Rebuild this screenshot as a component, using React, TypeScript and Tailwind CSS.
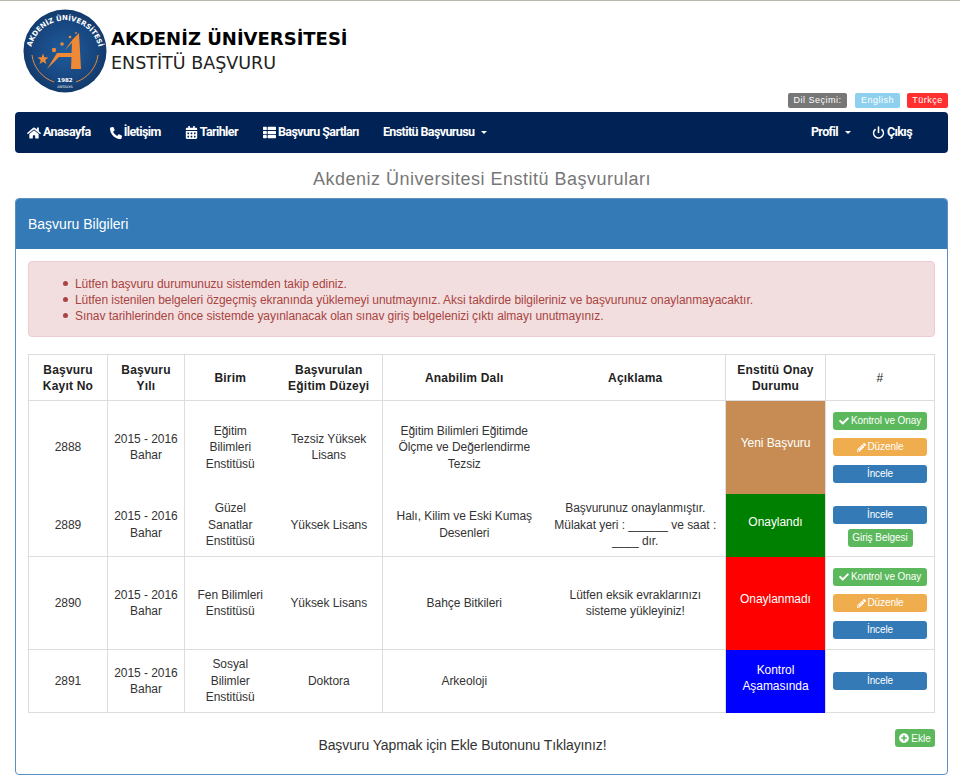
import React from 'react';
import { FaHome, FaPhoneAlt, FaCalendarAlt, FaThList, FaCheck, FaPencilAlt, FaPlusCircle } from 'react-icons/fa';
import { FiPower } from 'react-icons/fi';

function Logo() {
  return (
    <svg width="84" height="84" viewBox="0 0 84 84" className="shrink-0">
      <defs>
        <radialGradient id="logoBg" cx="50%" cy="50%" r="50%">
          <stop offset="0%" stopColor="#1f5c9c" />
          <stop offset="75%" stopColor="#17457e" />
          <stop offset="100%" stopColor="#123a6b" />
        </radialGradient>
        <path id="logoTop" d="M7.5 46 A34.5 34.5 0 1 1 76.5 46" />
      </defs>
      <circle cx="42" cy="42" r="41.5" fill="url(#logoBg)" />
      <text fill="#ffffff" fontSize="7" fontWeight="700" fontFamily="'DejaVu Sans', sans-serif">
        <textPath href="#logoTop" startOffset="50%" textAnchor="middle">AKDENİZ ÜNİVERSİTESİ</textPath>
      </text>
      <path d="M9 46 A33 33 0 0 0 31 73" fill="none" stroke="#e88b3a" strokeWidth="1" />
      <path d="M75 46 A33 33 0 0 1 53 73" fill="none" stroke="#e88b3a" strokeWidth="1" />
      <text x="42" y="73" textAnchor="middle" fill="#ffffff" fontSize="5.5" fontWeight="700" fontFamily="'DejaVu Sans', sans-serif">1982</text>
      <text x="42" y="79" textAnchor="middle" fill="#ffffff" fontSize="3.6" fontFamily="'DejaVu Sans', sans-serif">ANTALYA</text>
      <path d="M56 24 L58 60 L48 60 L48.5 48 L36 48 L24 60 L34 44 L48.5 44 L49 34 L42 41 L50 30 Z" fill="#ee8a35" />
      <path d="M20 44.5 L21.4 48.3 L25.5 48.5 L22.3 51 L23.4 55 L20 52.7 L16.6 55 L17.7 51 L14.5 48.5 L18.6 48.3 Z" fill="#ee8a35" />
      <circle cx="31" cy="41" r="2.2" fill="#ee8a35" />
      <circle cx="39" cy="35" r="1.8" fill="#ee8a35" />
      <circle cx="47" cy="28" r="1.3" fill="#ee8a35" />
      <circle cx="53" cy="24" r="0.9" fill="#ee8a35" />
    </svg>
  );
}

function NavItem({ icon, children, caret }: { icon?: React.ReactNode; children: React.ReactNode; caret?: boolean }) {
  return (
    <a className="flex items-center gap-[2px] text-white font-bold text-[12.5px] tracking-[-0.6px] font-['Roboto',sans-serif]">
      {icon}
      <span>{children}</span>
      {caret && <span className="ml-[5px] w-0 h-0 border-x-[3px] border-x-transparent border-t-[3px] border-t-white" />}
    </a>
  );
}

function Btn({ color, icon, children }: { color: string; icon?: React.ReactNode; children: React.ReactNode }) {
  return (
    <div className={`${color} w-[94px] h-[18px] rounded-[3px] text-white text-[10px] tracking-[-0.1px] flex items-center justify-center gap-[2px] leading-none`}>
      {icon}
      {children}
    </div>
  );
}

const green = 'bg-[#5cb85c]';
const orange = 'bg-[#f0ad4e]';
const blue = 'bg-[#337ab7]';

function ControlButtons() {
  return (
    <div className="flex flex-col items-center gap-[8.5px]">
      <Btn color={green} icon={<FaCheck className="w-[10px] h-[10px]" />}>Kontrol ve Onay</Btn>
      <Btn color={orange} icon={<FaPencilAlt className="w-[9px] h-[9px]" />}>Düzenle</Btn>
      <Btn color={blue}>İncele</Btn>
    </div>
  );
}

const notes = [
  'Lütfen başvuru durumunuzu sistemden takip ediniz.',
  'Lütfen istenilen belgeleri özgeçmiş ekranında yüklemeyi unutmayınız. Aksi takdirde bilgileriniz ve başvurunuz onaylanmayacaktır.',
  'Sınav tarihlerinden önce sistemde yayınlanacak olan sınav giriş belgelenizi çıktı almayı unutmayınız.',
];

const rows = [
  {
    no: '2888',
    birim: <>Eğitim<br />Bilimleri<br />Enstitüsü</>,
    duzey: <>Tezsiz Yüksek<br />Lisans</>,
    dal: <>Eğitim Bilimleri Eğitimde<br />Ölçme ve Değerlendirme<br />Tezsiz</>,
    aciklama: null,
    durum: <>Yeni Başvuru</>,
    durumClass: 'bg-[#c68c53] pb-[8px]',
    actions: <ControlButtons />,
    h: 'h-[93px]',
    last: false,
  },
  {
    no: '2889',
    birim: <>Güzel<br />Sanatlar<br />Enstitüsü</>,
    duzey: <>Yüksek Lisans</>,
    dal: <>Halı, Kilim ve Eski Kumaş<br />Desenleri</>,
    aciklama: <>Başvurunuz onaylanmıştır.<br />Mülakat yeri : ______ ve saat :<br />____ dır.</>,
    durum: <>Onaylandı</>,
    durumClass: 'bg-[#008000] pb-[6px]',
    actions: (
      <div className="flex flex-col items-center gap-[5px] pt-[4px]">
        <Btn color={blue}>İncele</Btn>
        <div className={`${green} w-[65px] h-[18px] rounded-[3px] text-white text-[10px] flex items-center justify-center`}>Giriş Belgesi</div>
      </div>
    ),
    h: 'h-[63px]',
    last: true,
  },
  {
    no: '2890',
    birim: <>Fen Bilimleri<br />Enstitüsü</>,
    duzey: <>Yüksek Lisans</>,
    dal: <>Bahçe Bitkileri</>,
    aciklama: <>Lütfen eksik evraklarınızı<br />sisteme yükleyiniz!</>,
    durum: <>Onaylanmadı</>,
    durumClass: 'bg-[#ff0000] pb-[8px]',
    actions: <ControlButtons />,
    h: 'h-[93px]',
    last: true,
  },
  {
    no: '2891',
    birim: <>Sosyal<br />Bilimler<br />Enstitüsü</>,
    duzey: <>Doktora</>,
    dal: <>Arkeoloji</>,
    aciklama: null,
    durum: <>Kontrol<br />Aşamasında</>,
    durumClass: 'bg-[#0000ff] pb-[7px]',
    actions: <div className="flex justify-center"><Btn color={blue}>İncele</Btn></div>,
    h: 'h-[63px]',
    last: true,
  },
];

export default function App() {
  return (
    <div className="w-[960px] h-[784px] overflow-hidden bg-white border-t border-[#b8b8a8] font-['Liberation_Sans',Arial,sans-serif] text-[12px] text-[#333]">
      {/* Logo header */}
      <div className="flex items-center pl-[23px] pt-[8px] h-[92px]">
        <Logo />
        <div className="ml-[4px] font-['DejaVu_Sans',sans-serif] text-black">
          <div className="font-bold text-[18px] leading-[25px]">AKDENİZ ÜNİVERSİTESİ</div>
          <div className="text-[17.5px] leading-[25px] text-[#222]">ENSTİTÜ BAŞVURU</div>
        </div>
      </div>

      {/* Language */}
      <div className="flex justify-end items-start pr-[12px] h-[19px] text-[9px] tracking-[0.5px] text-white">
        <span className="bg-[#777] rounded-[2px] w-[59px] h-[15px] flex items-center justify-center">Dil Seçimi:</span>
        <span className="bg-[#8ed1ef] rounded-[2px] ml-[8px] w-[45px] h-[15px] flex items-center justify-center">English</span>
        <span className="bg-[#ff3030] rounded-[2px] ml-[7px] w-[41px] h-[15px] flex items-center justify-center">Türkçe</span>
      </div>

      {/* Navbar */}
      <nav className="ml-[15px] mr-[12px] h-[41px] bg-[#002255] rounded-[4px] flex items-center justify-between pl-[12px] pr-[36px]">
        <div className="flex items-center">
          <NavItem icon={<FaHome className="w-[14px] h-[14px]" />}>Anasayfa</NavItem>
          <div className="ml-[19px]"><NavItem icon={<FaPhoneAlt className="w-[12px] h-[12px]" />}>İletişim</NavItem></div>
          <div className="ml-[24px]"><NavItem icon={<FaCalendarAlt className="w-[13px] h-[13px]" />}>Tarihler</NavItem></div>
          <div className="ml-[25px]"><NavItem icon={<FaThList className="w-[13px] h-[13px]" />}>Başvuru Şartları</NavItem></div>
          <div className="ml-[24px]"><NavItem caret>Enstitü Başvurusu</NavItem></div>
        </div>
        <div className="flex items-center gap-[21px]">
          <NavItem caret>Profil</NavItem>
          <NavItem icon={<FiPower className="w-[13px] h-[13px] stroke-[3]" />}>Çıkış</NavItem>
        </div>
      </nav>

      <h1 className="text-center text-[18px] leading-[20px] text-[#777] mt-[16px] pl-[4px] tracking-[0.5px]">Akdeniz Üniversitesi Enstitü Başvuruları</h1>

      {/* Panel */}
      <section className="ml-[15px] mr-[12px] mt-[9px] h-[577px] border border-[#5a8fbf] rounded-[4px] overflow-hidden">
        <div className="bg-[#337ab7] h-[50px] flex items-center pl-[12px] text-white text-[14px]">Başvuru Bilgileri</div>
        <div className="px-[12px] pt-[12px]">
          <div className="h-[76px] bg-[#f2dede] border border-[#ebccd1] rounded-[4px] text-[#a94442] flex items-center pt-[1px]">
            <ul className="pl-[34px] leading-[16px] tracking-[-0.05px]">
              {notes.map((note) => (
                <li key={note} className="flex items-center">
                  <span className="w-[5px] h-[5px] rounded-full bg-[#a94442] mr-[7px]" />
                  {note}
                </li>
              ))}
            </ul>
          </div>

          <table className="mt-[17px] w-[906px] table-fixed border-collapse text-center">
            <colgroup>
              <col className="w-[79px]" />
              <col className="w-[77px]" />
              <col className="w-[91px]" />
              <col className="w-[107px]" />
              <col className="w-[163px]" />
              <col className="w-[180px]" />
              <col className="w-[100px]" />
              <col className="w-[109px]" />
            </colgroup>
            <thead>
              <tr className="h-[46px] font-bold text-[#222] tracking-[0.2px] leading-[16px]">
                <th className="border border-[#ddd]">Başvuru<br />Kayıt No</th>
                <th className="border border-[#ddd]">Başvuru<br />Yılı</th>
                <th className="border-y border-l border-[#ddd]">Birim</th>
                <th className="border-y border-r border-[#ddd]">Başvurulan<br />Eğitim Düzeyi</th>
                <th className="border-y border-l border-[#ddd]">Anabilim Dalı</th>
                <th className="border-y border-r border-[#ddd]">Açıklama</th>
                <th className="border border-[#ddd]">Enstitü Onay<br />Durumu</th>
                <th className="border border-[#ddd] font-normal">#</th>
              </tr>
            </thead>
            <tbody className="leading-[16.5px] tracking-[-0.05px]">
              {rows.map((r) => {
                // the first row runs into the second with no rule between them
                const line = r.last ? 'border-b border-b-[#ddd]' : '';
                return (
                  <tr key={r.no} className={r.h}>
                    <td className={`${line} border-x border-x-[#ddd]`}>{r.no}</td>
                    <td className={`${line} border-x border-x-[#ddd]`}>2015 - 2016<br />Bahar</td>
                    <td className={`${line} border-l border-l-[#ddd]`}>{r.birim}</td>
                    <td className={`${line} border-r border-r-[#ddd]`}>{r.duzey}</td>
                    <td className={`${line} border-l border-l-[#ddd]`}>{r.dal}</td>
                    <td className={`${line} border-r border-r-[#ddd]`}>{r.aciklama}</td>
                    <td className={`${r.durumClass} text-white leading-[16px]`}>{r.durum}</td>
                    <td className={`${line} border-x border-x-[#ddd]`}>{r.actions}</td>
                  </tr>
                );
              })}
            </tbody>
          </table>

          <div className="relative mt-[16px] w-[907px]">
            <p className="text-center text-[14px] leading-[32px] text-[#333] tracking-[-0.1px] pr-[38px]">Başvuru Yapmak için Ekle Butonunu Tıklayınız!</p>
            <div className={`${green} absolute right-0 top-0 w-[40px] h-[18px] rounded-[3px] text-white text-[10px] flex items-center justify-center gap-[2px]`}>
              <FaPlusCircle className="w-[10px] h-[10px]" />Ekle
            </div>
          </div>
        </div>
      </section>
    </div>
  );
}
